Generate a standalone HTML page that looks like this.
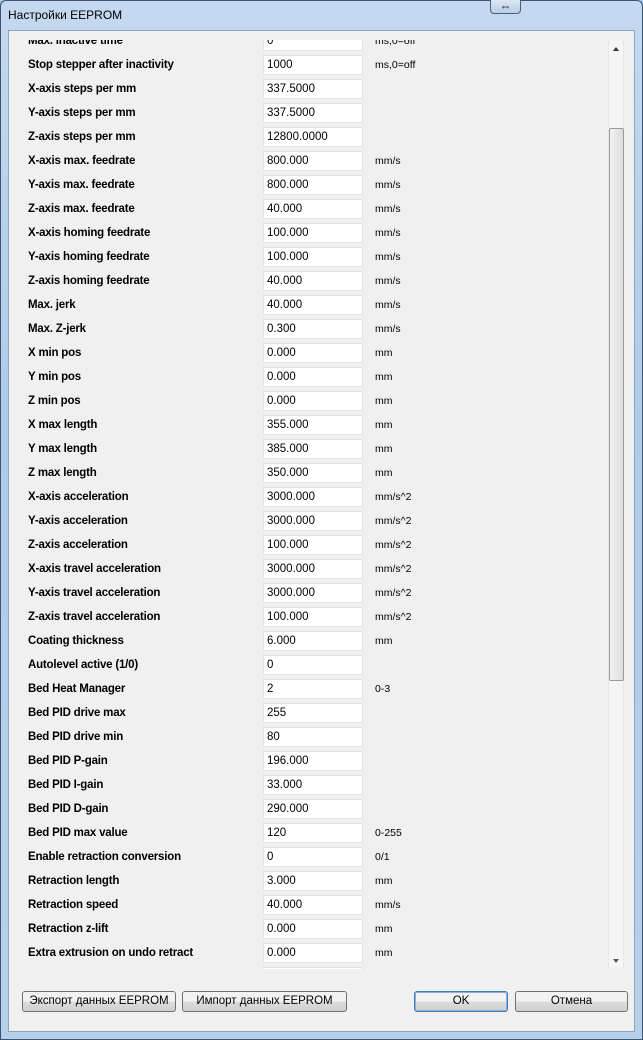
<!DOCTYPE html>
<html><head><meta charset="utf-8"><style>
*{margin:0;padding:0;box-sizing:border-box}
body{width:643px;height:1040px;background:#a9c6e4;font-family:"Liberation Sans","DejaVu Sans",sans-serif;position:relative;overflow:hidden}
.frame{position:absolute;left:0;top:0;width:643px;height:1040px;background:linear-gradient(#c4d9ef,#aecbe8 40%,#b7d0ea);border:1px solid #3c5470;border-radius:6px 6px 0 0}
.title{position:absolute;left:8px;top:8px;font-size:12px;color:#000}
.btnx{position:absolute;left:490px;top:-2px;width:31px;height:16px;border:1px solid #4a5f78;border-radius:0 0 4px 4px;background:linear-gradient(#dfe9f5,#b9cde3);font-size:12px;text-align:center;line-height:14px;color:#223}
.client{position:absolute;left:8px;top:30px;width:627px;height:1002px;background:#f0f0f0;border:1px solid #8ba4c0}
.list{position:absolute;left:0;top:9px;width:598px;height:929px;overflow:hidden}
.row{position:absolute;left:0;height:24px;width:598px}
.row .l{position:absolute;left:19px;top:6px;font-size:11.5px;font-weight:bold;color:#000;white-space:nowrap;letter-spacing:-0.2px}
.row .i{position:absolute;left:254px;top:2px;width:100px;height:20px;background:#fff;border:1px solid #e0e3e7;font-size:11.5px;padding:3px 0 0 3px}
.row .u{position:absolute;left:366px;top:6px;font-size:10.5px}
.sb{position:absolute;left:599px;top:8px;width:16px;height:930px;background:#f5f5f5;border-left:1px solid #e6e6e6;border-right:1px solid #e6e6e6}
.thumb{position:absolute;left:0;top:89px;width:15px;height:553px;border:1px solid #9a9a9a;border-radius:2px;background:linear-gradient(90deg,#f2f2f2,#dcdcdc)}
.arr{position:absolute;left:4px;width:0;height:0;border-left:3px solid transparent;border-right:3px solid transparent}
.b{position:absolute;top:960px;height:21px;border:1px solid #707070;border-radius:3px;background:linear-gradient(#f2f2f2 50%,#dddddd 50%,#cfcfcf);font-size:11.5px;text-align:center;line-height:19px}
</style></head><body>
<div class="frame"></div>
<div class="title">Настройки EEPROM</div>
<div class="btnx">⇔</div>
<div class="client">
<div class="list" id="list"></div>
<div class="sb"><div class="arr" style="top:8px;border-bottom:4px solid #333"></div><div class="thumb"></div><div class="arr" style="top:920px;border-top:4px solid #555"></div></div>
<div class="b" style="left:13px;width:154px">Экспорт данных EEPROM</div>
<div class="b" style="left:173px;width:165px">Импорт данных EEPROM</div>
<div class="b" style="left:405px;width:94px;border-color:#3c7fb1;box-shadow:inset 0 0 0 1px #9ad">OK</div>
<div class="b" style="left:506px;width:113px">Отмена</div>
</div>
<script>
var d=[["Max. inactive time","0","ms,0=off"],["Stop stepper after inactivity","1000","ms,0=off"],["X-axis steps per mm","337.5000",""],["Y-axis steps per mm","337.5000",""],["Z-axis steps per mm","12800.0000",""],["X-axis max. feedrate","800.000","mm/s"],["Y-axis max. feedrate","800.000","mm/s"],["Z-axis max. feedrate","40.000","mm/s"],["X-axis homing feedrate","100.000","mm/s"],["Y-axis homing feedrate","100.000","mm/s"],["Z-axis homing feedrate","40.000","mm/s"],["Max. jerk","40.000","mm/s"],["Max. Z-jerk","0.300","mm/s"],["X min pos","0.000","mm"],["Y min pos","0.000","mm"],["Z min pos","0.000","mm"],["X max length","355.000","mm"],["Y max length","385.000","mm"],["Z max length","350.000","mm"],["X-axis acceleration","3000.000","mm/s^2"],["Y-axis acceleration","3000.000","mm/s^2"],["Z-axis acceleration","100.000","mm/s^2"],["X-axis travel acceleration","3000.000","mm/s^2"],["Y-axis travel acceleration","3000.000","mm/s^2"],["Z-axis travel acceleration","100.000","mm/s^2"],["Coating thickness","6.000","mm"],["Autolevel active (1/0)","0",""],["Bed Heat Manager","2","0-3"],["Bed PID drive max","255",""],["Bed PID drive min","80",""],["Bed PID P-gain","196.000",""],["Bed PID I-gain","33.000",""],["Bed PID D-gain","290.000",""],["Bed PID max value","120","0-255"],["Enable retraction conversion","0","0/1"],["Retraction length","3.000","mm"],["Retraction speed","40.000","mm/s"],["Retraction z-lift","0.000","mm"],["Extra extrusion on undo retract","0.000","mm"],["Retraction undo speed","0.000","mm/s"]];
var h="";for(var k=0;k<d.length;k++){h+='<div class="row" style="top:'+(-11+24*k)+'px"><span class="l">'+d[k][0]+'</span><div class="i">'+d[k][1]+'</div><span class="u">'+d[k][2]+'</span></div>';}
document.getElementById("list").innerHTML=h;
</script>
</body></html>
